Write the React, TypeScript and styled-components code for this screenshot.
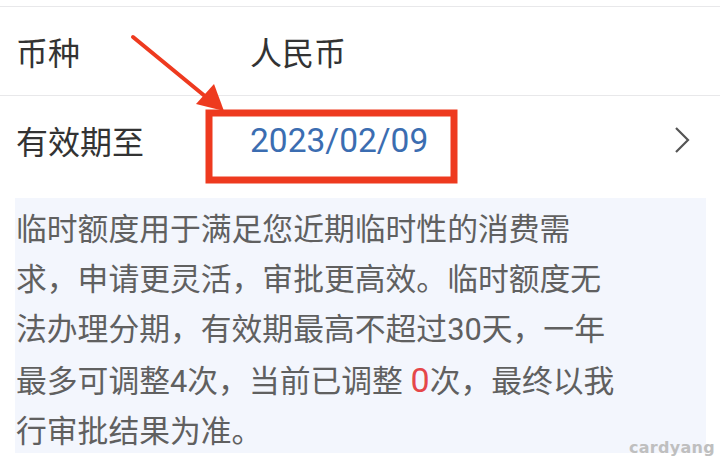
import React from 'react';
import styled, { createGlobalStyle } from 'styled-components';

const GlobalStyle = createGlobalStyle`
  html, body {
    margin: 0;
    padding: 0;
    background: #ffffff;
  }
  body {
    font-family: Roboto, "Noto Sans CJK SC", sans-serif;
  }
`;

const Page = styled.div`
  position: relative;
  width: 720px;
  height: 459px;
  padding-top: 6px;
  box-sizing: border-box;
  overflow: hidden;
  background: #ffffff;
`;

const Row = styled.div`
  display: flex;
  align-items: center;
  height: 88px;
  border-top: 1px solid #e8e8ea;
`;

const Label = styled.div`
  width: 234px;
  padding-left: 16px;
  font-size: 32px;
  color: #333333;
`;

const Value = styled.div<{ $link?: boolean }>`
  flex: 1;
  font-size: ${(p) => (p.$link ? '33.5px' : '32px')};
  color: ${(p) => (p.$link ? '#3b6db1' : '#333333')};
`;

const Chevron = styled.svg`
  width: 18px;
  height: 28px;
  margin-right: 29px;
`;

const Notice = styled.div`
  margin: 14px 14px 0 15px;
  height: 255px;
  padding: 7px 0 0 1px;
  box-sizing: border-box;
  background: #f3f6fd;
  font-size: 30.8px;
  line-height: 50px;
  color: #606060;
`;

// the remaining-count number is set a bit larger than the text around it
const Count = styled.span`
  font-size: 34px;
  color: #e5474a;
`;

const Watermark = styled.div`
  position: absolute;
  right: 5px;
  bottom: 2px;
  font-family: "DejaVu Sans", sans-serif;
  font-weight: bold;
  font-size: 16px;
  letter-spacing: 0.3px;
  color: #bfbfbf;
`;

const Annotation = styled.svg`
  position: absolute;
  left: 0;
  top: 0;
  width: 720px;
  height: 459px;
  pointer-events: none;
`;

export default function App() {
  return (
    <>
      <GlobalStyle />
      <Page>
        <Row>
          <Label>币种</Label>
          <Value>人民币</Value>
        </Row>
        <Row>
          <Label>有效期至</Label>
          <Value $link>2023/02/09</Value>
          <Chevron viewBox="0 0 18 28">
            <path d="M3 2 L15 14 L3 26" fill="none" stroke="#555" strokeWidth="2.2" />
          </Chevron>
        </Row>
        <Notice>
          临时额度用于满足您近期临时性的消费需
          <br />
          求，申请更灵活，审批更高效。临时额度无
          <br />
          法办理分期，有效期最高不超过30天，一年
          <br />
          最多可调整4次，当前已调整 <Count>0</Count>次，最终以我
          <br />
          行审批结果为准。
        </Notice>
        <Watermark>cardyang</Watermark>
        <Annotation viewBox="0 0 720 459">
          <rect x="209" y="113" width="245" height="67" fill="none" stroke="#ee3a1f" strokeWidth="7" />
          <line x1="133" y1="37" x2="206" y2="97" stroke="#ee3a1f" strokeWidth="4" strokeLinecap="round" />
          <polygon points="224,111 196,104 214,84" fill="#ee3a1f" />
        </Annotation>
      </Page>
    </>
  );
}
